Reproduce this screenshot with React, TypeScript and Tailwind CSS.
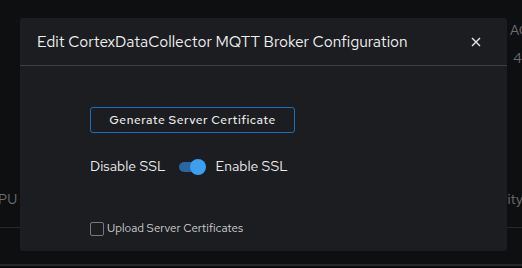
import React, { useState } from "react";

const font = { fontFamily: '"Red Hat Text", Inter, "Noto Sans", sans-serif' };

export default function App() {
  const [ssl, setSsl] = useState(true);
  const [upload, setUpload] = useState(false);

  return (
    <div className="relative w-[522px] h-[268px] overflow-hidden bg-[#0e0f11]" style={font}>
      {/* page behind the modal */}
      <div className="flex flex-col h-full">
        <div className="flex justify-end pt-[22px]">
          <div className="w-[12px] flex flex-col gap-[12px] text-[14px] text-[#6b6e73] leading-[16px]">
            <span>AC</span>
            <span className="pl-[3px]">4</span>
          </div>
        </div>
        <div className="flex justify-between mt-[125px] text-[14px] leading-[16px] text-[#6b6e73]">
          <span className="-ml-[2px]">PU (</span>
          <span className="-mr-[1px]">vity</span>
        </div>
        <div className="mt-[20px] h-px bg-[#26282c]" />
        <div className="mt-[36px] h-[2px] bg-[#26282c]" />
        <div className="flex-1 bg-[#0b0c0d]" />
      </div>

      {/* modal */}
      <div className="absolute left-[20px] top-[18px] w-[487px] h-[233px] rounded-[3px] bg-[#1b1d21] flex flex-col">
        <div className="h-[48px] flex items-center justify-between pl-[17px] pr-[26px] border-b border-[#3d3f44]">
          <h2 className="text-[15.5px] text-[#f0f0f0] font-normal">
            Edit CortexDataCollector MQTT Broker Configuration
          </h2>
          <button className="text-[#e8e8e8]">
            <svg width="10" height="10" viewBox="0 0 10 10">
              <path d="M1 1L9 9M9 1L1 9" stroke="currentColor" strokeWidth="1.4" />
            </svg>
          </button>
        </div>

        <div className="flex flex-col items-start pl-[70px] pt-[41px]">
          <button className="h-[26px] w-[205px] rounded-[3px] border border-[#1f6eb6] text-[12px] font-medium tracking-[0.5px] text-[#eaeaea]">
            Generate Server Certificate
          </button>

          <div className="flex items-center mt-[23px] text-[14px] text-[#ececec]">
            <span>Disable SSL</span>
            <button
              onClick={() => setSsl(!ssl)}
              className="relative ml-[12px] mr-[10px] w-[28px] h-[16px] flex items-center"
            >
              <span className="w-[24px] h-[10px] ml-[1px] rounded-full bg-[#2b66a0]" />
              <span className="absolute right-0 w-[16px] h-[16px] rounded-full bg-[#3b9ff2]" />
            </button>
            <span>Enable SSL</span>
          </div>

          <label className="flex items-center mt-[43px] text-[11.5px] text-[#cfcfcf]">
            <input
              type="checkbox"
              checked={upload}
              onChange={() => setUpload(!upload)}
              className="appearance-none w-[14px] h-[14px] rounded-[2px] border border-[#77797d] bg-transparent mr-[3px]"
            />
            Upload Server Certificates
          </label>
        </div>
      </div>
    </div>
  );
}
